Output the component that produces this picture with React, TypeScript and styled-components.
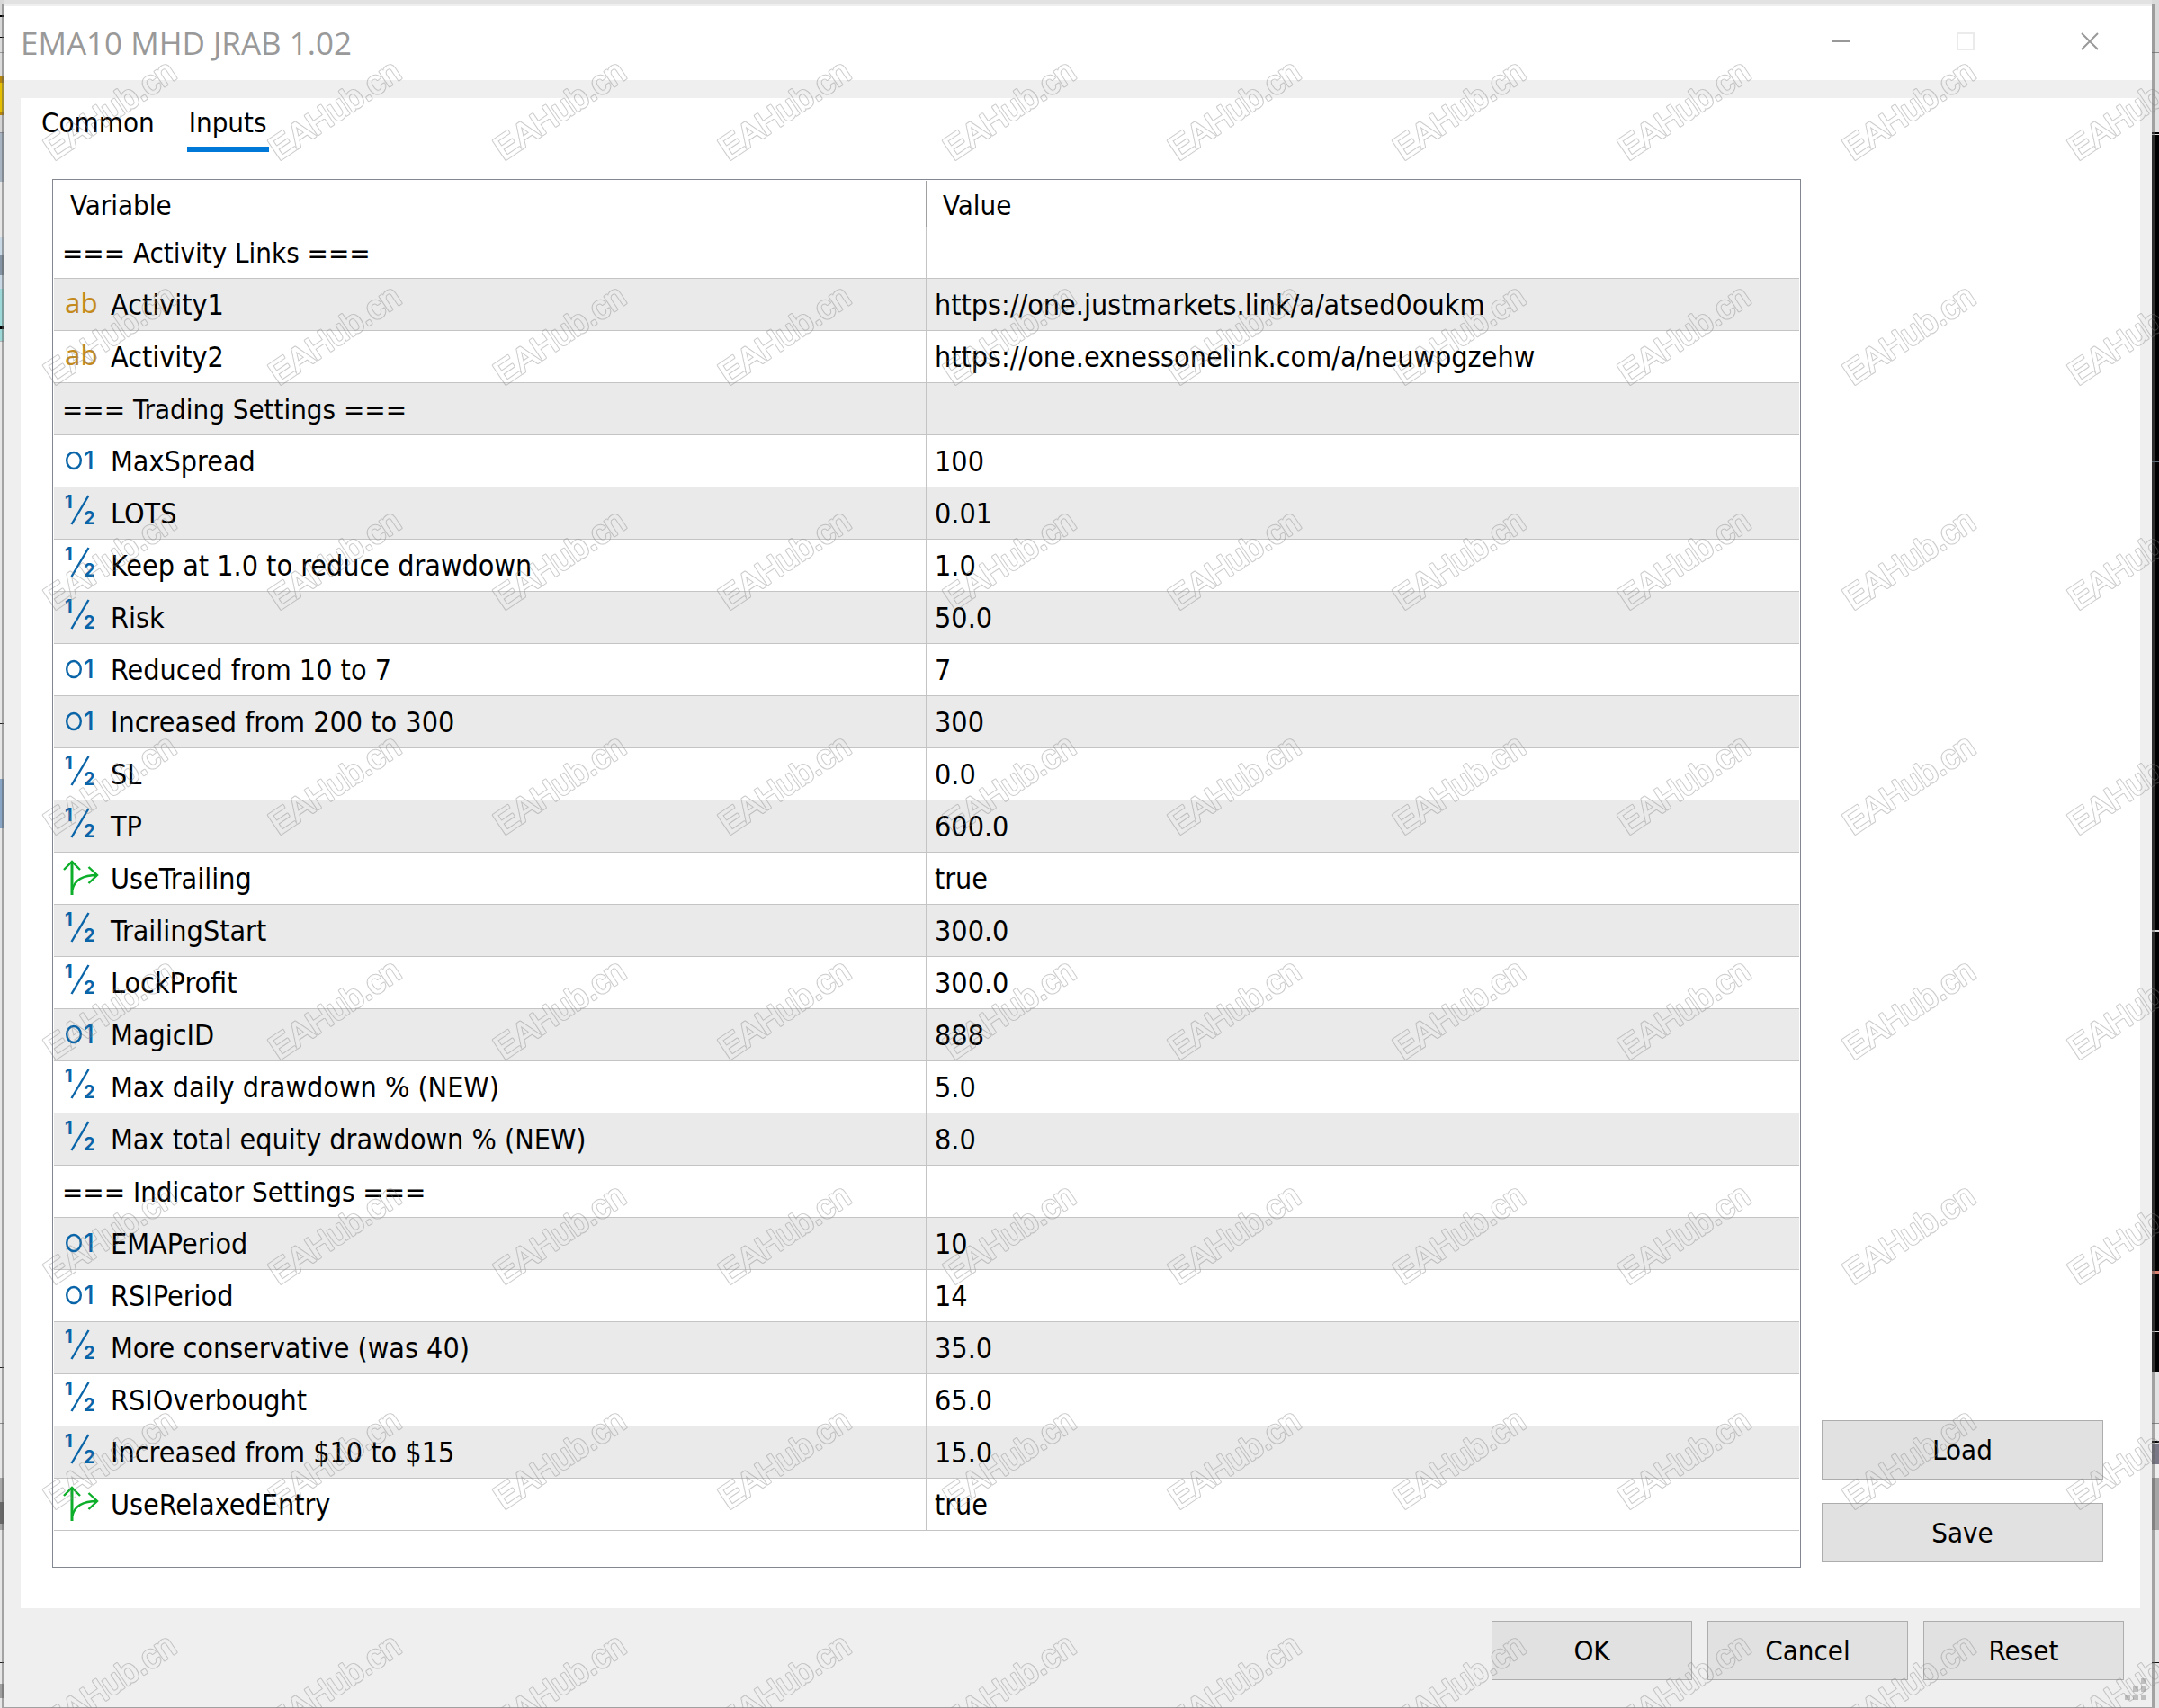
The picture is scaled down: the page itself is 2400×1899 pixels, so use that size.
import React, { useState } from "react";
import styled, { createGlobalStyle } from "styled-components";

const uiFont = `"DejaVu Sans Condensed", "DejaVu Sans", Tahoma, sans-serif`;

const GlobalStyle = createGlobalStyle`
  *, *::before, *::after { box-sizing: border-box; }
  body { margin: 0; background: #e2e2e2; }
  button { font: inherit; color: inherit; margin: 0; padding: 0; border: 0; background: none; cursor: default; }
`;

/* ---------- desktop behind the dialog ---------- */

type Stripe = [color: string, end: number];

const stripes = (list: Stripe[]) => {
  let from = 0;
  const stops = list.map(([color, end]) => {
    const stop = `${color} ${from}px ${end}px`;
    from = end;
    return stop;
  });
  return `linear-gradient(to bottom, ${stops.join(", ")})`;
};

const leftDesktop = stripes([
  ["#d8d8d8", 17], ["#000000", 19], ["#d8d8d8", 41], ["#000000", 42], ["#d8d8d8", 44], ["#000000", 45],
  ["#dcdcdc", 58], ["#9a9a9a", 59], ["#dcdcdc", 84], ["#b8860b", 92], ["#e6bf00", 125], ["#b8860b", 128],
  ["#d4d4d4", 147], ["#8e8e96", 148], ["#a9b4c2", 202], ["#e6e6e6", 264], ["#c8d8e4", 283], ["#8494a4", 306],
  ["#c8d8e4", 321], ["#9cd8d8", 362], ["#000000", 366], ["#9cd8d8", 379], ["#b4b4b4", 380], ["#e6e6e6", 804],
  ["#202020", 805], ["#e6e6e6", 866], ["#88a5c6", 921], ["#e6e6e6", 1520], ["#202020", 1521], ["#e6e6e6", 1582],
  ["#8c8c8c", 1583], ["#e6e6e6", 1643], ["#a8a8a8", 1670], ["#686868", 1694], ["#a8a8a8", 1701],
  ["#e6e6e6", 1848], ["#202020", 1849], ["#e6e6e6", 1872], ["#a0a0a0", 1888], ["#e6e6e6", 2400],
]);

const rightDesktop = stripes([
  ["#dadada", 58], ["#8c8c8c", 59], ["#e2e2e2", 147], ["#000000", 149], ["#e6e6e6", 150], ["#000000", 513],
  ["#5c7080", 514], ["#000000", 1034], ["#dcdcdc", 1036], ["#000000", 1413], ["#d98070", 1416],
  ["#000000", 1480], ["#dcdcdc", 1481], ["#000000", 1525], ["#e2e2e2", 1582], ["#8c8c8c", 1583],
  ["#eeeeee", 1602], ["#000000", 1604], ["#d8d8d8", 1606], ["#787888", 1628], ["#eeeeee", 1643],
  ["#a6a6a6", 1701], ["#e6e6e6", 1848], ["#101010", 1849], ["#e6e6e6", 2400],
]);

const Screen = styled.div`
  position: relative;
  display: grid;
  grid-template-columns: 5px minmax(0, 1fr) 8px;
  min-height: 100vh;
  overflow: hidden;
  font: 32px/40px ${uiFont};
  color: #000;
`;

const Desktop = styled.div<{ $fill: string; $side: "left" | "right" }>`
  display: flex;
  justify-content: ${(p) => (p.$side === "left" ? "flex-end" : "flex-start")};
  background: ${(p) => p.$fill};
`;

const Shadow = styled.div`
  width: 3px;
  margin-top: 4px;
  background: rgba(94, 94, 94, 0.49);
`;

/* ---------- dialog ---------- */

const Dialog = styled.main`
  position: relative;
  display: flex;
  flex-direction: column;
  margin-top: 4px;
  border-top: 1px solid #a0a0a0;
  border-bottom: 1px solid #a0a0a0;
  background: #efefef;
`;

const TitleBar = styled.header`
  display: flex;
  justify-content: space-between;
  height: 82px;
  margin-top: 2px;
  background: #fff;
`;

const Title = styled.h1`
  margin: 0;
  padding-left: 18px;
  font: 400 35px/82px "Open Sans", "Noto Sans", sans-serif;
  color: #999;
`;

const Controls = styled.div`
  display: flex;
`;

const ControlButton = styled.button`
  display: grid;
  place-items: center;
  width: 138px;
  height: 78px;
`;

const Panel = styled.section`
  flex: 1;
  display: flex;
  flex-direction: column;
  margin: 20px 13px 0 18px;
  background: #fff;
`;

const Tabs = styled.div`
  display: flex;
  gap: 36px;
  padding: 0 23px;
`;

const Tab = styled.button<{ $active: boolean }>`
  min-width: 91px;
  height: 60px;
  border-bottom: 6px solid ${(p) => (p.$active ? "#0078d7" : "transparent")};
  font-size: 31px;
`;

const Body = styled.div`
  flex: 1;
  display: flex;
  gap: 23px;
  padding: 30px 41px 45px 35px;
`;

const Sheet = styled.div`
  flex: 1;
  min-width: 0;
  padding: 1px;
  border: 1px solid #828790;
`;

const Grid = styled.table`
  width: 100%;
  table-layout: fixed;
  border-collapse: separate;
  border-spacing: 0;
`;

const HeadCell = styled.th`
  height: 51px;
  padding: 2px 18px 0;
  text-align: left;
  font-weight: 400;
  font-size: 31px;
  &:first-child { border-right: 1px solid #a0a0a0; }
`;

const Row = styled.tr<{ $shaded: boolean }>`
  background: ${(p) => (p.$shaded ? "#eaeaea" : "#fff")};
`;

const Cell = styled.td`
  height: 58px;
  padding: 1px 9px 0;
  border-bottom: 1px solid #c4c4c4;
  white-space: nowrap;
  &:first-child { border-right: 1px solid #c4c4c4; }
`;

const SectionName = styled.span`
  font-size: 31px;
`;

const VariableName = styled.span`
  display: flex;
  align-items: center;
  gap: 12px;
  padding-left: 2px;
`;

const Icon = styled.svg`
  flex: none;
  width: 40px;
  height: 42px;
  overflow: visible;
`;

const Side = styled.div`
  display: flex;
  flex-direction: column;
  justify-content: flex-end;
  gap: 26px;
  width: 313px;
  padding-bottom: 6px;
`;

const PushButton = styled.button`
  height: 66px;
  min-width: 223px;
  border: 1px solid #adadad;
  background: #e1e1e1;
  font-size: 31px;
`;

const Footer = styled.footer`
  display: flex;
  justify-content: flex-end;
  gap: 17px;
  padding: 14px 31px 30px;
`;

const Grip = styled.svg`
  position: absolute;
  right: 6px;
  bottom: 8px;
  width: 24px;
  height: 24px;
`;

const Watermark = styled.svg`
  position: absolute;
  inset: 0;
  width: 100%;
  height: 100%;
  pointer-events: none;
`;

/* ---------- icons ---------- */

type Kind = "text" | "int" | "real" | "bool";
const blue = "#0a64a8";

function KindIcon({ kind }: { kind: Kind }) {
  if (kind === "text")
    return (
      <Icon viewBox="0 0 40 42" aria-hidden="true">
        <text x="1" y="30" fontFamily="Noto Sans" fontWeight="400" fontSize="31" fill="#c48a1c">ab</text>
      </Icon>
    );
  if (kind === "int")
    return (
      <Icon viewBox="0 0 40 42" aria-hidden="true">
        <ellipse cx="11" cy="20" rx="7.8" ry="9" fill="none" stroke={blue} strokeWidth="2.4" />
        <text x="22" y="30" fontFamily="Inter" fontWeight="500" fontSize="28" fill={blue}>1</text>
      </Icon>
    );
  if (kind === "real")
    return (
      <Icon viewBox="0 0 40 42" aria-hidden="true">
        <text x="1" y="15" fontFamily="Inter" fontWeight="700" fontSize="20" fill={blue}>1</text>
        <line x1="8.5" y1="33" x2="27.5" y2="1" stroke={blue} strokeWidth="2.4" />
        <text x="22" y="33" fontFamily="Inter" fontWeight="700" fontSize="20" fill={blue}>2</text>
      </Icon>
    );
  return (
    <Icon viewBox="0 0 40 42" aria-hidden="true" fill="none" stroke="#0cae2a" strokeWidth="2.4">
      <path d="M9 2V39" strokeWidth="3" />
      <path d="M0 11L9 2L18 11" />
      <path d="M9.5 33C12 22 22 17 37 17" />
      <path d="M27.5 8L37 17L27.5 26" />
    </Icon>
  );
}

/* ---------- data ---------- */

interface Entry {
  name: string;
  value?: string;
  kind?: Kind;
}

const entries: Entry[] = [
  { name: "=== Activity Links ===" },
  { name: "Activity1", kind: "text", value: "https://one.justmarkets.link/a/atsed0oukm" },
  { name: "Activity2", kind: "text", value: "https://one.exnessonelink.com/a/neuwpgzehw" },
  { name: "=== Trading Settings ===" },
  { name: "MaxSpread", kind: "int", value: "100" },
  { name: "LOTS", kind: "real", value: "0.01" },
  { name: "Keep at 1.0 to reduce drawdown", kind: "real", value: "1.0" },
  { name: "Risk", kind: "real", value: "50.0" },
  { name: "Reduced from 10 to 7", kind: "int", value: "7" },
  { name: "Increased from 200 to 300", kind: "int", value: "300" },
  { name: "SL", kind: "real", value: "0.0" },
  { name: "TP", kind: "real", value: "600.0" },
  { name: "UseTrailing", kind: "bool", value: "true" },
  { name: "TrailingStart", kind: "real", value: "300.0" },
  { name: "LockProfit", kind: "real", value: "300.0" },
  { name: "MagicID", kind: "int", value: "888" },
  { name: "Max daily drawdown % (NEW)", kind: "real", value: "5.0" },
  { name: "Max total equity drawdown % (NEW)", kind: "real", value: "8.0" },
  { name: "=== Indicator Settings ===" },
  { name: "EMAPeriod", kind: "int", value: "10" },
  { name: "RSIPeriod", kind: "int", value: "14" },
  { name: "More conservative (was 40)", kind: "real", value: "35.0" },
  { name: "RSIOverbought", kind: "real", value: "65.0" },
  { name: "Increased from $10 to $15", kind: "real", value: "15.0" },
  { name: "UseRelaxedEntry", kind: "bool", value: "true" },
];

const tabs = ["Common", "Inputs"];

function WatermarkText({ stroke, width, fill }: { stroke: string; width: number; fill: string }) {
  return (
    <text
      transform="translate(60 179) rotate(-34)"
      fontFamily="Liberation Sans, Arial, sans-serif"
      fontSize="37"
      fill={fill}
      stroke={stroke}
      strokeWidth={width}
      strokeLinejoin="round"
    >
      EAHub.cn
    </text>
  );
}

export default function App() {
  const [tab, setTab] = useState("Inputs");

  return (
    <Screen>
      <GlobalStyle />
      <Desktop $fill={leftDesktop} $side="left"><Shadow /></Desktop>

      <Dialog>
        <TitleBar>
          <Title>EMA10 MHD JRAB 1.02</Title>
          <Controls>
            <ControlButton aria-label="Minimize">
              <svg width="20" height="20"><path d="M0 10H20" stroke="#999" strokeWidth="2" /></svg>
            </ControlButton>
            <ControlButton aria-label="Maximize" disabled>
              <svg width="20" height="20"><rect x="1" y="1" width="18" height="18" fill="none" stroke="#ebebeb" strokeWidth="2" /></svg>
            </ControlButton>
            <ControlButton aria-label="Close">
              <svg width="20" height="20"><path d="M1 1L19 19M19 1L1 19" stroke="#999" strokeWidth="2" /></svg>
            </ControlButton>
          </Controls>
        </TitleBar>

        <Panel>
          <Tabs role="tablist">
            {tabs.map((t) => (
              <Tab key={t} role="tab" aria-selected={t === tab} $active={t === tab} onClick={() => setTab(t)}>
                {t}
              </Tab>
            ))}
          </Tabs>
          <Body>
            <Sheet>
              <Grid>
                <thead>
                  <tr>
                    <HeadCell scope="col">Variable</HeadCell>
                    <HeadCell scope="col">Value</HeadCell>
                  </tr>
                </thead>
                <tbody>
                  {entries.map((e, i) => (
                    <Row key={e.name} $shaded={i % 2 === 1}>
                      <Cell>
                        {e.kind ? (
                          <VariableName><KindIcon kind={e.kind} />{e.name}</VariableName>
                        ) : (
                          <SectionName>{e.name}</SectionName>
                        )}
                      </Cell>
                      <Cell>{e.value}</Cell>
                    </Row>
                  ))}
                </tbody>
              </Grid>
            </Sheet>
            <Side>
              <PushButton>Load</PushButton>
              <PushButton>Save</PushButton>
            </Side>
          </Body>
        </Panel>

        <Footer>
          <PushButton>OK</PushButton>
          <PushButton>Cancel</PushButton>
          <PushButton>Reset</PushButton>
        </Footer>
        <Grip viewBox="0 0 24 24" fill="#bfbfbf" aria-hidden="true">
          <path d="M18 0h6v6h-6zM9 9h6v6H9zM18 9h6v6h-6zM0 18h6v6H0zM9 18h6v6H9zM18 18h6v6h-6z" />
        </Grip>
      </Dialog>

      <Desktop $fill={rightDesktop} $side="right"><Shadow /></Desktop>

      <Watermark aria-hidden="true">
        <defs>
          <mask id="outline" maskUnits="userSpaceOnUse" x="0" y="0" width="250" height="250">
            <WatermarkText stroke="#fff" width={3} fill="#fff" />
            <WatermarkText stroke="#000" width={1} fill="#000" />
          </mask>
          <pattern id="tile" width="250" height="250" patternUnits="userSpaceOnUse">
            <rect width="250" height="250" fill="#808080" fillOpacity="0.4" mask="url(#outline)" />
          </pattern>
        </defs>
        <rect width="100%" height="100%" fill="url(#tile)" />
      </Watermark>
    </Screen>
  );
}
